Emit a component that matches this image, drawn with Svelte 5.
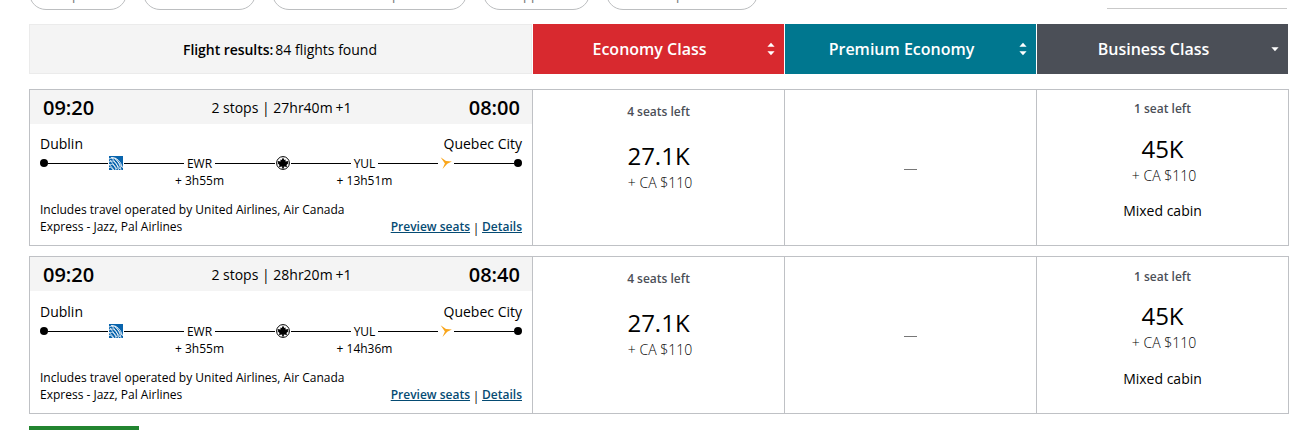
<script>
  const cabins = [
    { name: 'Economy Class', kind: 'eco', sort: 'both' },
    { name: 'Premium Economy', kind: 'prem', sort: 'both' },
    { name: 'Business Class', kind: 'biz', sort: 'down' }
  ];
  const filters = [
    { width: 98, tail: 'p', shift: 42 },
    { width: 113, tail: '', shift: 0 },
    { width: 195, tail: 'p', shift: 119 },
    { width: 107, tail: 'pp', shift: 39 },
    { width: 152, tail: 'p', shift: 69 }
  ];
  const flights = [
    { arrive: '08:00', duration: '27hr40m', layover: '13h51m' },
    { arrive: '08:40', duration: '28hr20m', layover: '14h36m' }
  ];
</script>

<div class="page">
  <div class="filters">
    {#each filters as f}
      <div class="pill" style="width:{f.width}px;padding-left:{f.shift}px">{f.tail}</div>
    {/each}
    <div class="sortline"></div>
  </div>

  <div class="grid head">
    <div class="results"><b>Flight results:</b><span>84 flights found</span></div>
    {#each cabins as c}
      <div class="cabin {c.kind}">
        <span>{c.name}</span>
        <svg class="sort" width="8" height="14" viewBox="0 0 8 14" fill="#fff">
          {#if c.sort === 'both'}
            <path d="M.4 4.8 4 .8l3.6 4zM.4 9.2h7.2L4 13.2z" />
          {:else}
            <path d="M.4 5.2h7.2L4 9.2z" />
          {/if}
        </svg>
      </div>
    {/each}
  </div>

  {#each flights as f, i}
    <div class="grid card" class:second={i === 1}>
      <div class="info">
        <div class="times">
          <strong>09:20</strong>
          <span>2 stops | {f.duration}<i>+1</i></span>
          <strong>{f.arrive}</strong>
        </div>
        <div class="cities"><span>Dublin</span><span>Quebec City</span></div>
        <div class="route">
          <b class="dot"></b><hr />
          <svg class="united" width="14" height="14" viewBox="0 0 14 14">
            <path fill="#0864ad" d="M0 0h14v14H0z" />
            <g fill="none" stroke="#fff" stroke-width=".8">
              <path d="M0 3C5 0 10 4 12 14M0 6C5 3 8 7 9.5 14M0 9c4-2 6 1 7 5M0 11.5c2-1 3 1 4 2.5M2 1.5C8 1 12 6 13.5 12M3 2l8 11M1 4l7 9M0 8l5 6M6 2l7 9" />
            </g>
          </svg><hr />
          <span class="stop ewr">EWR</span><hr />
          <svg class="ac" width="14" height="14" viewBox="0 0 14 14">
            <circle cx="7" cy="7" r="6.4" fill="#fff" stroke="#000" stroke-width="1" />
            <path d="M7 1.6 8.3 4l1.3-.6-.1 2 2.9-.3-.6 1.3.8.7-2.1 1.9.5 2-3.2-.4.1 1.9H6.1l.1-1.9-3.2.4.5-2-2.1-1.9.8-.7-.6-1.3 2.9.3-.1-2 1.3.6z" />
          </svg><hr />
          <span class="stop yul">YUL</span><hr />
          <svg class="pal" width="14" height="14" viewBox="0 0 14 14">
            <path fill="#f9a51a" d="M1.6 1.2 7 5.1l5.9.3-4.6 2.4-4.8 5.3 2.4-5.7z" />
          </svg><hr />
          <b class="dot"></b>
        </div>
        <div class="waits"><span>+ 3h55m</span><span>+ {f.layover}</span></div>
        <div class="bottom">
          <p>Includes travel operated by United Airlines, Air Canada<br />Express - Jazz, Pal Airlines</p>
          <div class="links"><u>Preview seats</u><em>|</em><u>Details</u></div>
        </div>
      </div>
      <div class="fare economy">
        <span class="seats">4 seats left</span>
        <span class="points">27.1K</span>
        <span class="cash">+ CA $110</span>
      </div>
      <div class="fare none"><span class="dash"></span></div>
      <div class="fare business">
        <span class="seats">1 seat left</span>
        <span class="points">45K</span>
        <span class="cash">+ CA $110</span>
        <span class="mixed">Mixed cabin</span>
      </div>
    </div>
  {/each}
  <div class="green"></div>
</div>

<style>
  :global(body) { background: #fff; }
  .page { width: 1313px; height: 430px; overflow: hidden; box-sizing: border-box; padding-left: 29px; font-family: "Open Sans", sans-serif; color: #000; }
  .page * { box-sizing: border-box; }
  .filters { display: flex; gap: 16px; height: 24px; align-items: flex-start; }
  .pill { flex: none; height: 34px; margin-top: -24px; border: 1px solid #bcbec0; border-radius: 17px; font-size: 13px; line-height: 34px; padding-top: 1px; color: #777; }
  .sortline { width: 180px; height: 9px; margin-left: 333px; border-bottom: 1px solid #c9c9c9; }
  .grid { display: grid; grid-template-columns: 503px 252px 252px 252px; }
  .head { height: 50px; width: 1259px; }
  .results { display: flex; align-items: center; justify-content: center; gap: 2px; padding: 0 1px 0 0; background: #f4f4f4; border: 1px solid #ebebeb; font-size: 14px; }
  .results b { font-weight: 600; letter-spacing: -0.05px; }
  .cabin { display: grid; grid-template-columns: 1fr 8px; align-items: center; margin-left: 1px; padding-right: 9px; color: #fff; font-size: 16px; font-weight: 600; text-align: center; }
  .cabin span { padding-right: 1px; }
  .eco { background: #d8292f; }
  .prem { background: #00778f; }
  .biz { background: #4b4f57; }
  .card { width: 1260px; height: 157px; margin-top: 15px; border: 1px solid #bfc1c5; }
  .card.grid { grid-template-columns: 502px 252px 252px 252px; }
  .second { height: 158px; margin-top: 10px; }
  .times { display: flex; height: 34px; align-items: center; justify-content: space-between; padding: 0 12px 0 13px; background: #f4f4f4; font-size: 14px; }
  .times strong { font-size: 20px; font-weight: 600; line-height: 34px; padding-top: 1px; }
  .times span { padding-top: 1px; }
  .times i { font-style: normal; margin-left: 3px; }
  .cities { display: flex; justify-content: space-between; padding: 10px 10px 0; font-size: 14px; line-height: 20px; }
  .second .cities { padding-top: 11px; }
  .route { display: flex; align-items: center; height: 14px; margin: 2px 10px 0; }
  .dot { flex: none; width: 8px; height: 8px; border-radius: 50%; background: #000; }
  hr { flex: 1; height: 1px; margin: 0; border: 0; background: #000; }
  .route svg { flex: none; margin: 0 1px; }
  .stop { flex: none; text-align: center; font-size: 12px; line-height: 14px; padding-top: 1px; }
  .ewr { width: 31px; }
  .yul { width: 27px; }
  .waits { display: flex; height: 18px; font-size: 12px; line-height: 18px; margin-top: 2px; }
  .waits span { width: 165px; text-align: center; }
  .waits span:first-child { margin-left: 87px; }
  .bottom { display: flex; justify-content: space-between; align-items: flex-end; margin: 11px 10px 0; font-size: 12px; line-height: 17px; }
  p { margin: 0; }
  .links { display: flex; color: #054b73; font-weight: 600; }
  .links em { width: 12px; color: #000; font-style: normal; font-weight: 400; text-align: center; padding-top: 2px; margin-bottom: -2px; }
  .fare { display: flex; flex-direction: column; align-items: center; border-left: 1px solid #bfc1c5; }
  .seats { font-size: 12px; font-weight: 600; line-height: 16px; color: #4b4f57; margin-top: 14px; }
  .business .seats { margin-top: 11px; }
  .points { font-size: 24px; line-height: 32px; margin-top: 20px; }
  .business .points { margin-top: 16px; }
  .second .business .seats { margin-top: 12px; }
  .second .business .points { margin-top: 15px; }
  .cash { font-size: 14px; line-height: 20px; font-weight: 300; padding-left: 3px; margin-top: 1px; }
  .mixed { font-size: 14px; line-height: 20px; margin-top: 15px; }
  .second .mixed { margin-top: 16px; }
  .none { justify-content: center; }
  .dash { width: 13px; height: 1px; background: #777; margin-top: 3px; }
  .green { width: 110px; height: 4px; margin-top: 12px; background: #228530; }
</style>
